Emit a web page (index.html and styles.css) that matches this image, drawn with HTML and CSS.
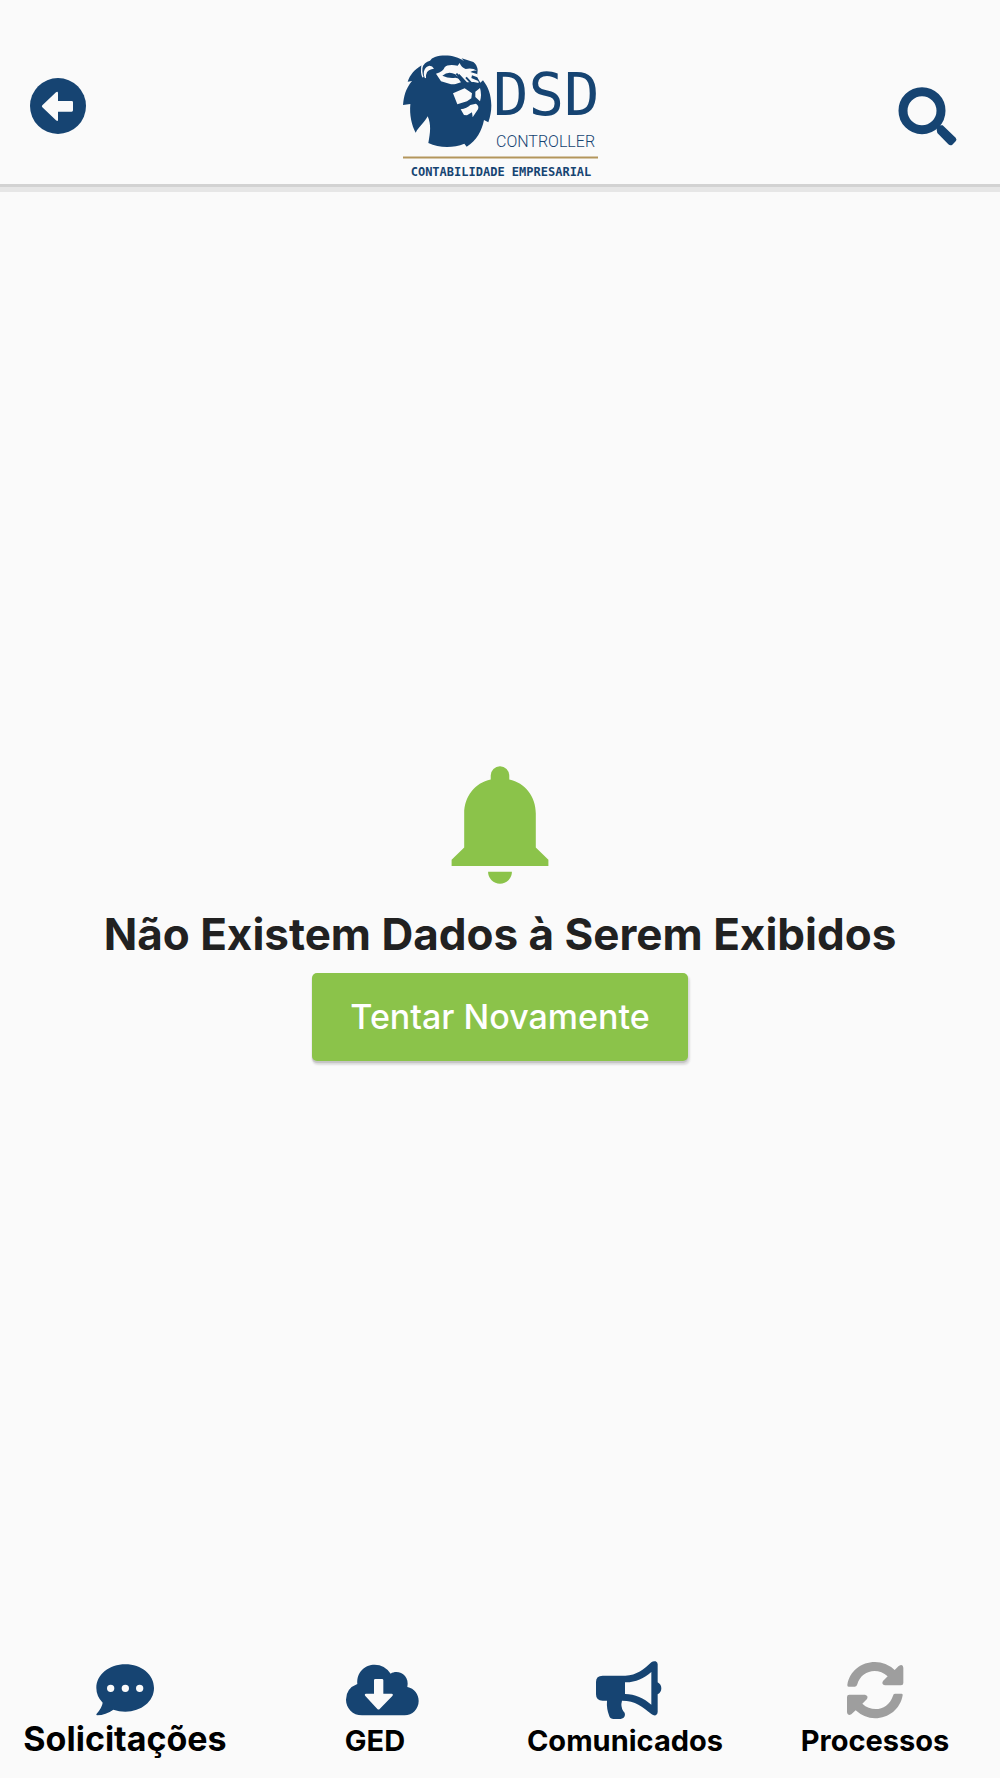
FILE: index.html
```html
<!DOCTYPE html>
<html lang="pt-BR">
<head>
<meta charset="utf-8">
<meta name="viewport" content="width=device-width, initial-scale=1">
<title>DSD Controller</title>
<link rel="stylesheet" href="styles.css">
</head>
<body>
<header class="topbar">
  <button class="icon-button back" type="button" aria-label="Voltar">
    <svg class="icon-back" viewBox="90 54 168 168" aria-hidden="true">
      <circle cx="174" cy="138" r="84" fill="#164472"/>
      <path d="M127 136L168 97Q174 93 174 100V123H215Q219 123 219 127V151Q219 155 215 155H174V179Q174 186 168 181L127 142Q124 139 127 136Z" fill="#fafafa"/>
    </svg>
  </button>
  <svg class="logo" viewBox="0 0 200 124" role="img" aria-label="DSD Controller Contabilidade Empresarial">
    <g transform="translate(-5 -7) scale(.33333)">
      <path fill="#164472" d="M80 52C58 65 45 81 38 101L51 99C32 122 27 142 24 171L46 168C43 202 50 232 62 254C72 235 90 222 98 205C109 230 106 254 100 285C132 300 174 301 208 287L215 296C245 278 260 250 267 216L280 223C286 206 289 190 289 172C288 139 280 118 264 97L256 104L246 86L248 66Q246 50 235 42L200 31L207 40C185 22 147 19 120 27Q109 30 105 38Q88 41 80 62Z"/>
      <path fill="none" stroke="#fafafa" stroke-width="4" d="M82 50Q77 72 84 88"/>
      <path fill="#fafafa" d="M89 89C82 72 90 54 104 53Q112 53 117 62Q101 64 96 73Q92 80 93 91ZM123 77C138 73 146 66 149 58Q158 48 188 53L194 45Q199 58 212 63Q231 58 246 68Q233 66 226 72L248 79L247 88L231 82L229 90L250 99L251 105L236 102L216 103L193 78L186 86L198 103L182 108Q171 110 163 107L138 100Q130 87 123 77ZM174 136L209 121L231 136L229 151L216 160L187 169ZM241 131L255 120Q261 140 255 160L241 147ZM197 184Q216 181 226 171L243 167Q253 174 249 184L233 208L231 193L216 202L207 201Z"/>
      <path fill="#164472" d="M142 83Q160 68 181 79L193 92L181 89Q162 92 142 83Z"/>
      <path d="M184 77L213 106L240 119M213 88L236 113" fill="none" stroke="#164472" stroke-width="6"/>
    </g>
    <text class="logo-name" x="93" y="60">DSD</text>
    <text class="logo-sub" x="96" y="92">CONTROLLER</text>
    <path d="M3 102.500H198" stroke="#b3965c" stroke-width="2"/>
    <text class="logo-tag" x="101" y="121" text-anchor="middle">CONTABILIDADE EMPRESARIAL</text>
  </svg>
  <button class="icon-button search" type="button" aria-label="Pesquisar">
    <svg class="icon-search" viewBox="84 80 177 177" aria-hidden="true">
      <circle cx="156" cy="151" r="57" fill="none" stroke="#164472" stroke-width="27"/>
      <path d="M200 208L201 198Q207 193 218 195L257 232Q262 238 257 243L247 253Q241 257 235 252L202 218Z" fill="#164472"/>
    </svg>
  </button>
</header>

<main class="empty">
  <svg class="bell" viewBox="63 47 294 356" aria-hidden="true">
    <path fill="#8bc34a" d="M182 88V76A28 28 0 0 1 238 76V88C286 98 318 140 318 190V293L356 330V349H64V330L102 293V190C102 140 134 98 182 88ZM174 366H246A36 36 0 0 1 174 366Z"/>
  </svg>
  <h1 class="message">Não Existem Dados à Serem Exibidos</h1>
  <button class="retry" type="button">Tentar Novamente</button>
</main>

<nav class="tabs">
  <a class="tab tab-active" href="#solicitacoes">
    <svg class="tab-icon" viewBox="288 63 174 174" aria-hidden="true">
      <path fill="#164472" fill-rule="evenodd" d="M376 73C424 73 462 104 462 144S424 215 376 215Q357 215 340 209Q318 225 291 226Q287 225 290 221Q306 203 308 188Q289 169 289 144C289 104 328 73 376 73ZM321 145a11 11 0 1 0 22 0a11 11 0 1 0-22 0M365 145a11 11 0 1 0 22 0a11 11 0 1 0-22 0M408 145a11 11 0 1 0 22 0a11 11 0 1 0-22 0"/>
    </svg>
    <span class="tab-label">Solicitações</span>
  </a>
  <a class="tab" href="#ged">
    <svg class="tab-icon" viewBox="288 63 174 174" aria-hidden="true">
      <path fill="#164472" d="M336 226C308 226 288 204 288 179Q288 145 322 132C319 96 345 74 374 74Q404 74 422 101C445 87 480 106 472 141C493 145 506 163 506 183C506 207 487 226 464 226Z"/>
      <path fill="#fafafa" d="M376 117H396Q400 117 400 121V161H425Q431 162 427 168L389 207Q386 210 382 207L346 168Q342 162 348 161H372V121Q372 117 376 117Z"/>
    </svg>
    <span class="tab-label">GED</span>
  </a>
  <a class="tab" href="#comunicados">
    <svg class="tab-icon" viewBox="288 63 174 174" aria-hidden="true">
      <path fill="#164472" fill-rule="evenodd" d="M308 107H376C410 107 432 87 454 67Q460 62 467 64Q473 67 473 73V127Q484 133 484 145T473 163V216Q473 223 467 226Q460 227 454 222C428 200 406 182 366 182Q361 199 370 214Q377 220 374 229Q371 237 362 237H341Q331 237 328 229Q319 205 321 182H308Q288 182 288 163V126Q288 107 308 107ZM375 127V162C405 162 432 175 454 194V96C432 115 405 128 375 127Z"/>
    </svg>
    <span class="tab-label">Comunicados</span>
  </a>
  <a class="tab" href="#processos">
    <svg class="tab-icon" viewBox="288 63 174 174" aria-hidden="true">
      <path fill="#9e9e9e" d="M296 140Q291 140 292 134C299 93 334 66 375 66Q408 66 434 90L446 78Q459 70 460 83V129Q460 136 453 136H405Q393 133 399 123L413 109C382 80 333 92 322 133Q320 140 315 140ZM455 161Q459 161 458 166C451 207 416 235 375 235Q342 234 317 211L304 223Q292 229 291 217V171Q291 164 298 164H345Q356 167 351 177L337 191C368 220 416 209 429 167Q430 161 435 161Z"/>
    </svg>
    <span class="tab-label">Processos</span>
  </a>
</nav>
</body>
</html>
```
FILE: styles.css
```css
* {
  box-sizing: border-box;
}

body {
  margin: 0;
  min-height: 100vh;
  display: flex;
  flex-direction: column;
  background: #fafafa;
  color: #212121;
  font-family: Inter, "Liberation Sans", sans-serif;
}

svg {
  display: block;
  overflow: visible;
}

.topbar {
  display: grid;
  grid-template-columns: 1fr auto 1fr;
  align-items: start;
  padding: 55px 30px 5px;
  box-shadow: 0 3px 0 #d2d2d2, 0 8px 0 #e6e6e6;
}

.icon-button {
  padding: 0;
  border: 0;
  background: none;
  cursor: pointer;
}

.back {
  justify-self: start;
  margin-top: 23px;
}

.search {
  justify-self: end;
  margin: 32px 13px 0 0;
}

.icon-back {
  width: 56px;
  height: 56px;
}

.icon-search {
  width: 59px;
  height: 59px;
}

.logo {
  width: 200px;
  height: 124px;
  fill: #164472;
  font-family: "DejaVu Sans Mono", monospace;
}

.logo-name {
  font-size: 59px;
}

.logo-sub {
  font-family: Roboto, sans-serif;
  font-size: 16px;
  font-weight: 300;
}

.logo-tag {
  font-size: 12px;
  font-weight: 700;
}

.empty {
  flex: 1;
  display: flex;
  flex-direction: column;
  align-items: center;
  justify-content: center;
}

.bell {
  width: 98px;
  height: 118px;
}

.message {
  margin: 24px 0 13px;
  font-size: 44px;
  line-height: 52px;
  font-weight: 700;
  text-align: center;
}

.retry {
  padding: 22px 38px;
  border: 0;
  border-radius: 5px;
  background: #8bc34a;
  box-shadow: 0 2px 1px #c4c4c4, 1px 3px 2px 1px #dedede;
  color: #fff;
  font: 500 34px/44px Inter, "Liberation Sans", sans-serif;
  cursor: pointer;
}

.tabs {
  display: grid;
  grid-template-columns: repeat(4, 1fr);
  padding: 19px 0 15px;
}

.tab {
  display: flex;
  flex-direction: column;
  align-items: center;
  color: #000;
  text-decoration: none;
}

.tab-icon {
  width: 58px;
  height: 58px;
}

.tab-label {
  font-size: 29px;
  line-height: 44px;
  font-weight: 700;
}

.tab-active .tab-label {
  font-size: 34px;
  line-height: 40px;
}
```
